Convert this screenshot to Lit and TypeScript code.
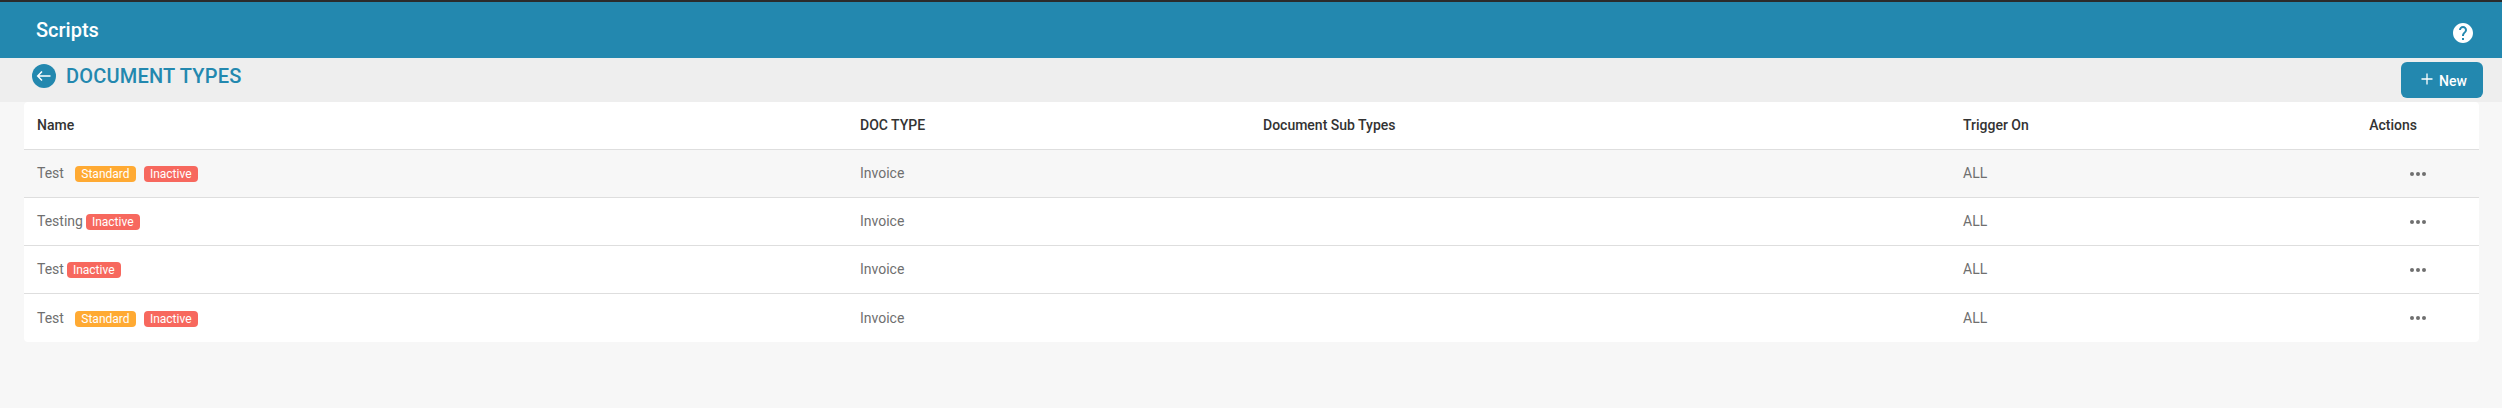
import { LitElement, html, css, nothing } from "lit";
import { customElement, property } from "lit/decorators.js";

interface DocRow {
  name: string;
  standard: boolean;
  docType: string;
  subTypes: string;
  trigger: string;
}

const ROWS: DocRow[] = [
  { name: "Test", standard: true, docType: "Invoice", subTypes: "", trigger: "ALL" },
  { name: "Testing", standard: false, docType: "Invoice", subTypes: "", trigger: "ALL" },
  { name: "Test", standard: false, docType: "Invoice", subTypes: "", trigger: "ALL" },
  { name: "Test", standard: true, docType: "Invoice", subTypes: "", trigger: "ALL" },
];

@customElement("doc-table")
export class DocTable extends LitElement {
  @property({ attribute: false }) rows: DocRow[] = [];

  static styles = css`
    :host {
      display: block;
      background: #fff;
      border-radius: 4px;
      overflow: hidden;
    }
    .row {
      display: grid;
      grid-template-columns: 823px 403px 700px 1fr;
      align-items: center;
      box-sizing: border-box;
      height: 48px;
      padding: 0 0 1px 13px;
      border-bottom: 1px solid #dedede;
      font-size: 14px;
      line-height: 20px;
      color: #6f6f6f;
    }
    .row.active {
      background: #f7f7f7;
    }
    .row:last-child {
      border-bottom: 0;
      padding-bottom: 0;
    }
    .head {
      color: #333;
      font-weight: 500;
    }
    .last {
      display: flex;
      align-items: center;
      justify-content: space-between;
      padding-right: 49px;
    }
    .head .last {
      padding-right: 62px;
    }
    .name {
      display: flex;
      align-items: center;
    }
    .badge {
      height: 16px;
      margin-top: 2px;
      margin-left: 3px;
      padding: 0 6px;
      border-radius: 4px;
      background: #f7685e;
      color: #fff;
      font-size: 12px;
      line-height: 16px;
    }
    .badge.standard {
      margin-left: 11px;
      padding: 0 6.4px;
      background: #ffaa33;
    }
    .badge.standard + .badge {
      margin-left: 8px;
    }
    .more {
      width: 24px;
      height: 24px;
      margin-top: 2px;
      fill: #6f6f6f;
    }
    .row:last-child .more {
      margin-top: 0;
    }
  `;

  render() {
    return html`
      <div class="row head">
        <span>Name</span><span>DOC TYPE</span><span>Document Sub Types</span>
        <span class="last"><span>Trigger On</span><span>Actions</span></span>
      </div>
      ${this.rows.map(
        (r, i) => html`<div class="row ${i === 0 ? "active" : ""}">
          <span class="name"
            ><span>${r.name}</span>
            ${r.standard ? html`<span class="badge standard">Standard</span>` : nothing}
            <span class="badge">Inactive</span></span
          >
          <span>${r.docType}</span><span>${r.subTypes}</span>
          <span class="last"
            ><span>${r.trigger}</span>
            <svg class="more" viewBox="0 0 24 24">
              <circle cx="6" cy="12" r="2" />
              <circle cx="12" cy="12" r="2" />
              <circle cx="18" cy="12" r="2" /></svg
          ></span>
        </div>`
      )}
    `;
  }
}

@customElement("app-root")
export class AppRoot extends LitElement {
  static styles = css`
    :host {
      display: block;
      box-sizing: border-box;
      height: 408px;
      background: #f7f7f7;
      font-family: Roboto, sans-serif;
    }
    .top {
      display: flex;
      justify-content: space-between;
      box-sizing: border-box;
      height: 58px;
      padding: 16px 27px 0 36px;
      border-top: 2px solid #2b2b2b;
      background: #2388af;
      color: #fff;
      font-size: 20px;
      font-weight: 500;
      line-height: 24px;
    }
    .help {
      width: 24px;
      height: 24px;
      margin-top: 3px;
      fill: #fff;
    }
    .bar {
      display: flex;
      justify-content: space-between;
      box-sizing: border-box;
      height: 44px;
      padding: 4px 19px 0 32px;
      background: #eee;
    }
    .title {
      display: flex;
      gap: 10px;
      height: 24px;
      padding-top: 2px;
      color: #2388af;
      font-size: 20px;
      font-weight: 500;
      line-height: 24px;
      letter-spacing: 0.2px;
    }
    .back {
      width: 24px;
      height: 24px;
    }
    .new {
      display: flex;
      align-items: center;
      gap: 6px;
      box-sizing: border-box;
      width: 82px;
      height: 36px;
      padding: 2px 0 0 20px;
      border: 0;
      border-radius: 6px;
      background: #2388af;
      color: #fff;
      font: 500 14px/20px Roboto, sans-serif;
    }
    .plus {
      width: 12px;
      height: 12px;
      margin-top: -4px;
    }
    .table {
      margin: 0 23px 0 24px;
    }
  `;

  render() {
    return html`
      <header class="top">
        <span>Scripts</span>
        <svg class="help" viewBox="0 0 24 24">
          <path
            d="M12 2C6.48 2 2 6.48 2 12s4.480 10 10 10 10-4.480 10-10S17.520 2 12 2zm1 17h-2v-2h2v2zm2.070-7.750l-.9.920C13.450 12.900 13 13.500 13 15h-2v-.5c0-1.100.45-2.100 1.170-2.830l1.240-1.260c.37-.36.59-.86.59-1.410 0-1.100-.9-2-2-2s-2 .9-2 2H8c0-2.210 1.790-4 4-4s4 1.790 4 4c0 .88-.36 1.680-.93 2.250z"
          />
        </svg>
      </header>
      <div class="bar">
        <div class="title">
          <svg class="back" viewBox="0 0 24 24">
            <circle cx="12" cy="12" r="12" fill="#2388af" />
            <path d="M18.500 12H6M10 7.500L5.700 12l4.300 4.500" fill="none" stroke="#fff" stroke-width="1.500" />
          </svg>
          <span>DOCUMENT TYPES</span>
        </div>
        <button class="new">
          <svg class="plus" viewBox="0 0 12 12">
            <path d="M6 .5v11M.5 6h11" stroke="#fff" stroke-width="1.300" />
          </svg>
          <span>New</span>
        </button>
      </div>
      <doc-table class="table" .rows=${ROWS}></doc-table>
    `;
  }
}
